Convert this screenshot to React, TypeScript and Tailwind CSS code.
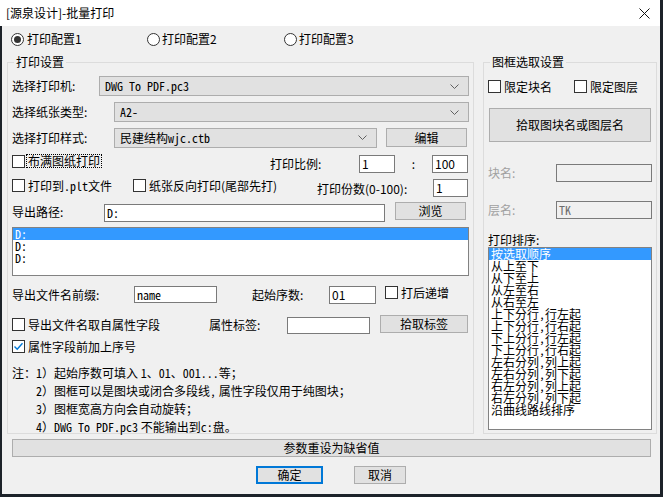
import React from "react";

const mono = "font-['Noto_Sans_Mono_CJK_SC','Liberation_Mono',monospace]";

function Box({ checked }: { checked?: boolean }) {
  return (
    <span className="w-[13px] h-[13px] shrink-0 border border-[#333333] bg-white flex items-center justify-center">
      {checked && (
        <svg width="11" height="11" viewBox="0 0 11 11">
          <path d="M1.5 5.5 L4.2 8.2 L9.5 2.2" fill="none" stroke="#0078d7" strokeWidth="1.4" />
        </svg>
      )}
    </span>
  );
}

function Radio({ checked }: { checked?: boolean }) {
  return (
    <span className="w-[13px] h-[13px] shrink-0 rounded-full border border-[#333333] bg-white flex items-center justify-center">
      {checked && <span className="w-[7px] h-[7px] rounded-full bg-[#333333]" />}
    </span>
  );
}

function Chevron() {
  return (
    <svg width="9" height="5" viewBox="0 0 9 5" className="shrink-0">
      <path d="M0.5 0.5 L4.5 4.5 L8.5 0.5" fill="none" stroke="#606060" strokeWidth="1" />
    </svg>
  );
}

function Combo({ className, children }: { className: string; children: React.ReactNode }) {
  return (
    <div className={`h-[20px] bg-[#e1e1e1] border border-[#adadad] flex items-center pl-[5px] pr-[9px] ${className}`}>
      <span className="flex-1 leading-[14px]">{children}</span>
      <Chevron />
    </div>
  );
}

function Btn({ className, children }: { className: string; children: React.ReactNode }) {
  return (
    <div className={`bg-[#e1e1e1] border border-[#adadad] flex items-center justify-center leading-[14px] ${className}`}>
      {children}
    </div>
  );
}

function Field({ className, children }: { className: string; children?: React.ReactNode }) {
  return (
    <div className={`bg-white border border-[#7a7a7a] flex items-center pl-[2px] leading-[14px] ${className}`}>
      {children}
    </div>
  );
}

// [before comma, after comma]; a single entry has no comma
const sortItems: string[][] = [
  ["按选取顺序"],
  ["从上至下"],
  ["从下至上"],
  ["从左至右"],
  ["从右至左"],
  ["上下分行", "行左起"],
  ["上下分行", "行右起"],
  ["下上分行", "行左起"],
  ["下上分行", "行右起"],
  ["左右分列", "列上起"],
  ["左右分列", "列下起"],
  ["右左分列", "列上起"],
  ["右左分列", "列下起"],
  ["沿曲线路线排序"],
];

export default function App() {
  return (
    <div className="w-[663px] h-[497px] bg-[#1c2229] overflow-hidden text-[12px] text-black font-['Noto_Sans_CJK_SC',sans-serif]">
      <div className="w-[660px] h-[494px] flex flex-col">
        {/* title bar */}
        <div className="h-[26px] bg-white flex items-center justify-between pl-[6px] pr-[10px]">
          <span className="leading-[16px]">[源泉设计]-批量打印</span>
          <svg width="11" height="11" viewBox="0 0 11 11">
            <path d="M0.5 0.5 L10.5 10.5 M10.5 0.5 L0.5 10.5" stroke="#111" strokeWidth="1" />
          </svg>
        </div>

        <div className="flex-1 ml-[2px] bg-[#f0f0f0] flex flex-col">
          {/* config radios */}
          <div className="h-[26px] flex items-center pl-[9px]">
            <div className="w-[136px] flex items-center gap-[3px]">
              <Radio checked />
              <span className="leading-[14px]">打印配置1</span>
            </div>
            <div className="w-[137px] flex items-center gap-[2px]">
              <Radio />
              <span className="leading-[14px]">打印配置2</span>
            </div>
            <div className="flex items-center gap-[2px]">
              <Radio />
              <span className="leading-[14px]">打印配置3</span>
            </div>
          </div>

          <div className="mt-[2px] flex">
            {/* left group */}
            <fieldset className="ml-[5px] w-[466px] h-[380px] border border-[#dcdcdc] px-[4px]">
              <legend className="ml-[2px] px-[2px] leading-[16px]">打印设置</legend>

              <div className="mt-[6px] h-[20px] flex items-center">
                <span className="w-[87px]">选择打印机:</span>
                <Combo className="w-[370px]">
                  <span className={mono}>DWG To PDF.pc3</span>
                </Combo>
              </div>

              <div className="mt-[6px] h-[20px] flex items-center">
                <span className="w-[102px]">选择纸张类型:</span>
                <Combo className="w-[355px]">
                  <span className={mono}>A2-</span>
                </Combo>
              </div>

              <div className="mt-[5px] h-[21px] flex items-center">
                <span className="w-[102px]">选择打印样式:</span>
                <Combo className="w-[263px]">
                  民建结构<span className={mono}>wjc.ctb</span>
                </Combo>
                <Btn className="ml-[9px] w-[81px] h-[19px]">编辑</Btn>
              </div>

              <div className="mt-[6px] h-[19px] flex items-start">
                <div className="w-[258px] h-[14px] flex items-center gap-[1px]">
                  <Box />
                  <span className="h-[14px] border border-dotted border-black px-[1px] leading-[12px]">布满图纸打印</span>
                </div>
                <span className="w-[89px] self-center leading-[14px]">打印比例:</span>
                <Field className="w-[36px] h-[18px] self-end">1</Field>
                <span className="w-[37px] self-center text-center leading-[14px]">:</span>
                <Field className="w-[36px] h-[18px] self-end">100</Field>
              </div>

              <div className="mt-[6px] h-[18px] flex items-start">
                <div className="w-[121px] h-[13px] flex items-center gap-[3px]">
                  <Box />
                  <span className="leading-[13px]">
                    打印到<span className={mono}>.plt</span>文件
                  </span>
                </div>
                <div className="w-[184px] h-[13px] flex items-center gap-[3px]">
                  <Box />
                  <span className="leading-[13px]">纸张反向打印(尾部先打)</span>
                </div>
                <span className="w-[116px] self-center leading-[14px] mt-[1px]">打印份数(0-100):</span>
                <Field className="w-[35px] h-[18px]">1</Field>
              </div>

              <div className="mt-[5px] h-[20px] flex items-center">
                <span className="w-[92px] leading-[14px]">导出路径:</span>
                <Field className="w-[281px] h-[18px] self-end">
                  <span className={mono}>D:</span>
                </Field>
                <Btn className="ml-[10px] w-[71px] h-[18px] self-start">浏览</Btn>
              </div>

              <div className={`mt-[5px] w-[457px] h-[49px] border border-[#828282] bg-white ${mono}`}>
                <div className="h-[12px] leading-[12px] pl-[2px] bg-[#3399ff] text-white">D:</div>
                <div className="h-[12px] leading-[12px] pl-[2px]">D:</div>
                <div className="h-[12px] leading-[12px] pl-[2px]">D:</div>
              </div>

              <div className="mt-[10px] h-[18px] flex items-center">
                <span className="w-[122px] leading-[14px]">导出文件名前缀:</span>
                <Field className="w-[83px] h-[17px] self-start">
                  <span className={mono}>name</span>
                </Field>
                <span className="ml-[35px] w-[77px] leading-[14px]">起始序数:</span>
                <Field className="w-[47px] h-[18px]">01</Field>
                <div className="ml-[9px] h-[13px] self-start flex items-center gap-[3px]">
                  <Box />
                  <span className="leading-[13px]">打后递增</span>
                </div>
              </div>

              <div className="mt-[11px] h-[19px] flex items-center">
                <div className="w-[197px] flex items-center gap-[3px]">
                  <Box />
                  <span className="leading-[13px]">导出文件名取自属性字段</span>
                </div>
                <span className="w-[78px] leading-[14px]">属性标签:</span>
                <Field className="w-[83px] h-[17px] self-end" />
                <Btn className="ml-[10px] w-[88px] h-[18px] self-start">拾取标签</Btn>
              </div>

              <div className="mt-[6px] h-[13px] flex items-center gap-[3px]">
                <Box checked />
                <span className="leading-[13px]">属性字段前加上序号</span>
              </div>

              <div className="mt-[11px] flex leading-[18px]">
                <span className="w-[24px]">注：</span>
                <div className="flex flex-col">
                  <span>
                    <span className={mono}>1</span>）起始序数可填入 <span className={mono}>1</span>、<span className={mono}>01</span>、<span className={mono}>001...</span>等；
                  </span>
                  <span>
                    <span className={mono}>2</span>）图框可以是图块或闭合多段线<span className={mono}>,</span> 属性字段仅用于纯图块；
                  </span>
                  <span>
                    <span className={mono}>3</span>）图框宽高方向会自动旋转；
                  </span>
                  <span>
                    <span className={mono}>4</span>）<span className={mono}>DWG To PDF.pc3</span> 不能输出到<span className={mono}>c:</span>盘。
                  </span>
                </div>
              </div>
            </fieldset>

            {/* right group */}
            <fieldset className="ml-[9px] w-[173px] h-[380px] border border-[#dcdcdc] px-[4px]">
              <legend className="ml-[2px] px-[2px] leading-[16px]">图框选取设置</legend>

              <div className="mt-[10px] h-[13px] flex items-center">
                <div className="w-[86px] flex items-center gap-[3px]">
                  <Box />
                  <span className="leading-[13px]">限定块名</span>
                </div>
                <div className="flex items-center gap-[3px]">
                  <Box />
                  <span className="leading-[13px]">限定图层</span>
                </div>
              </div>

              <Btn className="mt-[15px] ml-[1px] w-[162px] h-[34px]">拾取图块名或图层名</Btn>

              <div className="mt-[22px] h-[18px] flex items-center">
                <span className="w-[68px] text-[#a0a0a0] leading-[14px]">块名:</span>
                <div className="w-[96px] h-[18px] border border-[#7a7a7a] bg-[#f0f0f0]" />
              </div>

              <div className="mt-[19px] h-[18px] flex items-center">
                <span className="w-[68px] text-[#a0a0a0] leading-[14px]">层名:</span>
                <div className={`w-[96px] h-[18px] border border-[#7a7a7a] bg-[#f0f0f0] pl-[2px] flex items-center text-[#6d6d6d] ${mono}`}>
                  TK
                </div>
              </div>

              <div className="mt-[14px] h-[14px] leading-[14px]">打印排序:</div>

              <div className="w-[164px] h-[183px] border border-[#828282] bg-white">
                {sortItems.map((parts, i) => (
                  <div
                    key={parts.join(",")}
                    className={`h-[12px] leading-[12px] pl-[2px] whitespace-nowrap ${i === 0 ? "bg-[#3399ff] text-white" : ""}`}
                  >
                    {parts[0]}
                    {parts[1] && (
                      <>
                        <span className={mono}>,</span>
                        {parts[1]}
                      </>
                    )}
                  </div>
                ))}
              </div>
            </fieldset>
          </div>

          <Btn className="mt-[5px] ml-[10px] w-[639px] h-[18px]">参数重设为缺省值</Btn>

          <div className="mt-[9px] h-[18px] flex">
            <div className="ml-[254px] w-[67px] h-[18px] bg-[#e1e1e1] border-2 border-[#0078d7] flex items-center justify-center leading-[14px]">
              确定
            </div>
            <Btn className="ml-[31px] w-[52px] h-[18px]">取消</Btn>
          </div>
        </div>
      </div>
    </div>
  );
}
